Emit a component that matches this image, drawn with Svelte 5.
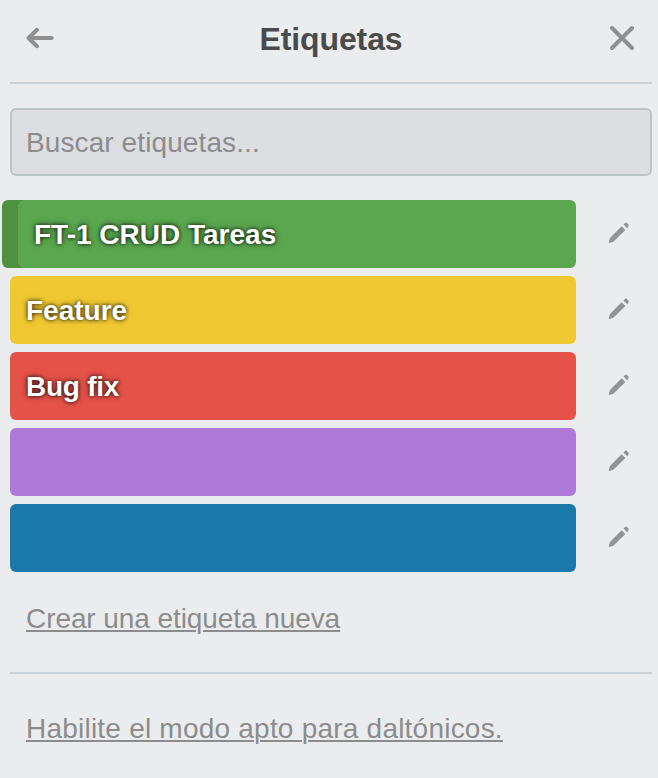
<script>
  const labels = [
    { name: 'FT-1 CRUD Tareas', color: '#5aa74f', selected: true },
    { name: 'Feature', color: '#f0c932' },
    { name: 'Bug fix', color: '#e55249', spacing: -0.25 },
    { name: '', color: '#ae79d8' },
    { name: '', color: '#1a79a9' }
  ];
</script>

<main>
  <header>
    <button aria-label="Volver">
      <svg width="28" height="24" viewBox="0 0 28 24"><path d="M11 3.8 2.6 12l8.4 8.2M3.2 12H25.7" fill="none" stroke="#8f8f8f" stroke-width="4" stroke-linecap="round" stroke-linejoin="round" /></svg>
    </button>
    <h1>Etiquetas</h1>
    <button aria-label="Cerrar">
      <svg width="26" height="26" viewBox="0 0 26 26"><path d="M2 3 22 23M22 3 2 23" fill="none" stroke="#8f8f8f" stroke-width="4" stroke-linecap="round" /></svg>
    </button>
  </header>
  <input placeholder="Buscar etiquetas..." aria-label="Buscar etiquetas" />
  <ul>
    {#each labels as label}
      <li>
        <div class="label" class:selected={label.selected} style="background-color: {label.color}; letter-spacing: {label.spacing ?? 0}px"><span>{label.name}</span></div>
        <button class="edit" aria-label="Editar">
          <svg width="22" height="22" viewBox="0 0 22 22" fill="#939393"><path d="M.8 20.2 1.8 16.6Q2 16 2.5 15.5L13.6 4.3 17.4 8.1 5.9 19.3Q5.3 19.9 4.6 20.1L1.2 20.9Q.5 21 .8 20.2ZM15.4 2.5 16.7 1.2Q17.9 0 19.2 1.3L20 2.1Q21.3 3.4 20.3 4.7L19.2 6.2Z" /></svg>
        </button>
      </li>
    {/each}
  </ul>
  <a class="create" href="#new">Crear una etiqueta nueva</a>
  <footer><a href="#colorblind">Habilite el modo apto para daltónicos.</a></footer>
</main>

<style>
  :global(body) { background: #ebecee; }
  main { box-sizing: border-box; height: 778px; padding: 0 6px 0 10px; overflow: hidden; font: 28px/34px "Liberation Sans", Arial, sans-serif; color: #8c8c8c; }
  header { box-sizing: border-box; height: 84px; padding: 0 16px 6px; display: flex; align-items: center; justify-content: space-between; border-bottom: 2px solid #c9d0d6; }
  h1 { margin: 0; padding: 2px 2px 0 0; font-size: 32px; line-height: 40px; letter-spacing: -.1px; color: #4a4a4a; }
  button { display: flex; border: 0; padding: 0; background: none; }
  input { display: block; box-sizing: border-box; width: 100%; height: 68px; margin: 24px 0; padding: 2px 14px 0; border: 2px solid #bdc4c8; border-radius: 6px; background: #dddee2; font: inherit; letter-spacing: .1px; }
  input::placeholder { color: #8c8c8c; opacity: 1; }
  ul { list-style: none; margin: 0; padding: 0; display: grid; gap: 8px; }
  li { height: 68px; display: flex; }
  .label { box-sizing: border-box; width: 566px; padding: 18px 16px 16px; border-radius: 6px; color: #fff; font-weight: bold; text-shadow: 0 0 10px rgba(0,0,0,.2), 0 0 4px #000; }
  .selected { width: 574px; margin-left: -8px; padding-left: 32px; background-image: radial-gradient(circle at 100% 100%, transparent 5.5px, #4f9141 6px), radial-gradient(circle at 100% 0, transparent 5.5px, #4f9141 6px), linear-gradient(#4f9141, #4f9141); background-size: 6px 6px, 6px 6px, 16px 100%; background-position: 16px 0, 16px 100%, 0 0; background-repeat: no-repeat; }
  .edit { margin: 22px 0 0 32px; align-self: flex-start; }
  a { color: #8c8c8c; text-decoration: underline; text-decoration-thickness: 2px; text-underline-offset: 2px; }
  .create { display: block; margin: 30px 16px 36px; letter-spacing: -.08px; }
  footer { border-top: 2px solid #c9d0d6; padding: 38px 16px; letter-spacing: .22px; }
</style>
